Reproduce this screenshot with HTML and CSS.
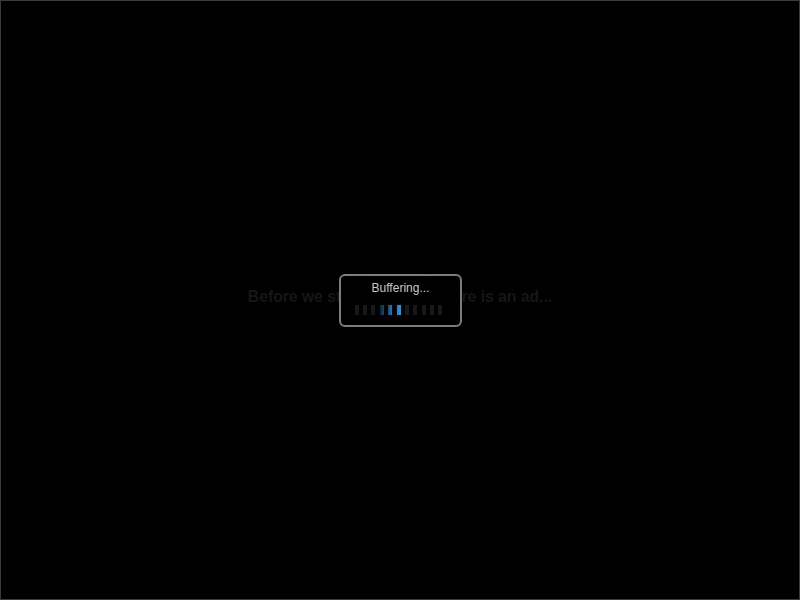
FILE: index.html
```html
<!DOCTYPE html>
<html>
<head>
<meta charset="utf-8">
<link rel="stylesheet" href="styles.css">
</head>
<body>
<div class="stage">
  <div class="ad-text">Before we start the game, here is an ad...</div>
  <div class="buffer">
    <div class="buffer-label">Buffering...</div>
    <div class="bars">
      <span class="bar"></span>
      <span class="bar"></span>
      <span class="bar"></span>
      <span class="bar bar-dim"></span>
      <span class="bar bar-mid"></span>
      <span class="bar bar-on"></span>
      <span class="bar"></span>
      <span class="bar"></span>
      <span class="bar"></span>
      <span class="bar"></span>
      <span class="bar"></span>
    </div>
  </div>
</div>
</body>
</html>
```
FILE: styles.css
```css
html, body {
  margin: 0;
  padding: 0;
  background: #000;
}
.stage {
  box-sizing: border-box;
  width: 800px;
  height: 600px;
  border: 1px solid #3a3a3a;
  background: #000;
  position: relative;
  display: flex;
  align-items: center;
  justify-content: center;
  font-family: "Liberation Sans", Arial, sans-serif;
}
.ad-text {
  font-weight: bold;
  font-size: 15.7px;
  color: #161616;
  margin-top: -6px;
}
.buffer {
  position: absolute;
  left: 338px;
  top: 273px;
  width: 123px;
  height: 53px;
  box-sizing: border-box;
  border: 2px solid #7c7c7c;
  border-radius: 6px;
  background: #000;
  display: flex;
  flex-direction: column;
  align-items: center;
}
.buffer-label {
  color: #c8c8c8;
  font-size: 12px;
  margin-top: 5px;
  line-height: 14px;
}
.bars {
  display: flex;
  gap: 4.35px;
  margin-top: 10px;
  margin-left: -4px;
}
.bar {
  width: 4px;
  height: 10px;
  background: #181818;
}
.bar-dim {
  background: linear-gradient(to right, #0a1f2e, #134e75);
}
.bar-mid {
  background: linear-gradient(to right, #0f4e78, #1a7cbd);
}
.bar-on {
  background: linear-gradient(to right, #1a86cc, #2a9be0);
}
```
